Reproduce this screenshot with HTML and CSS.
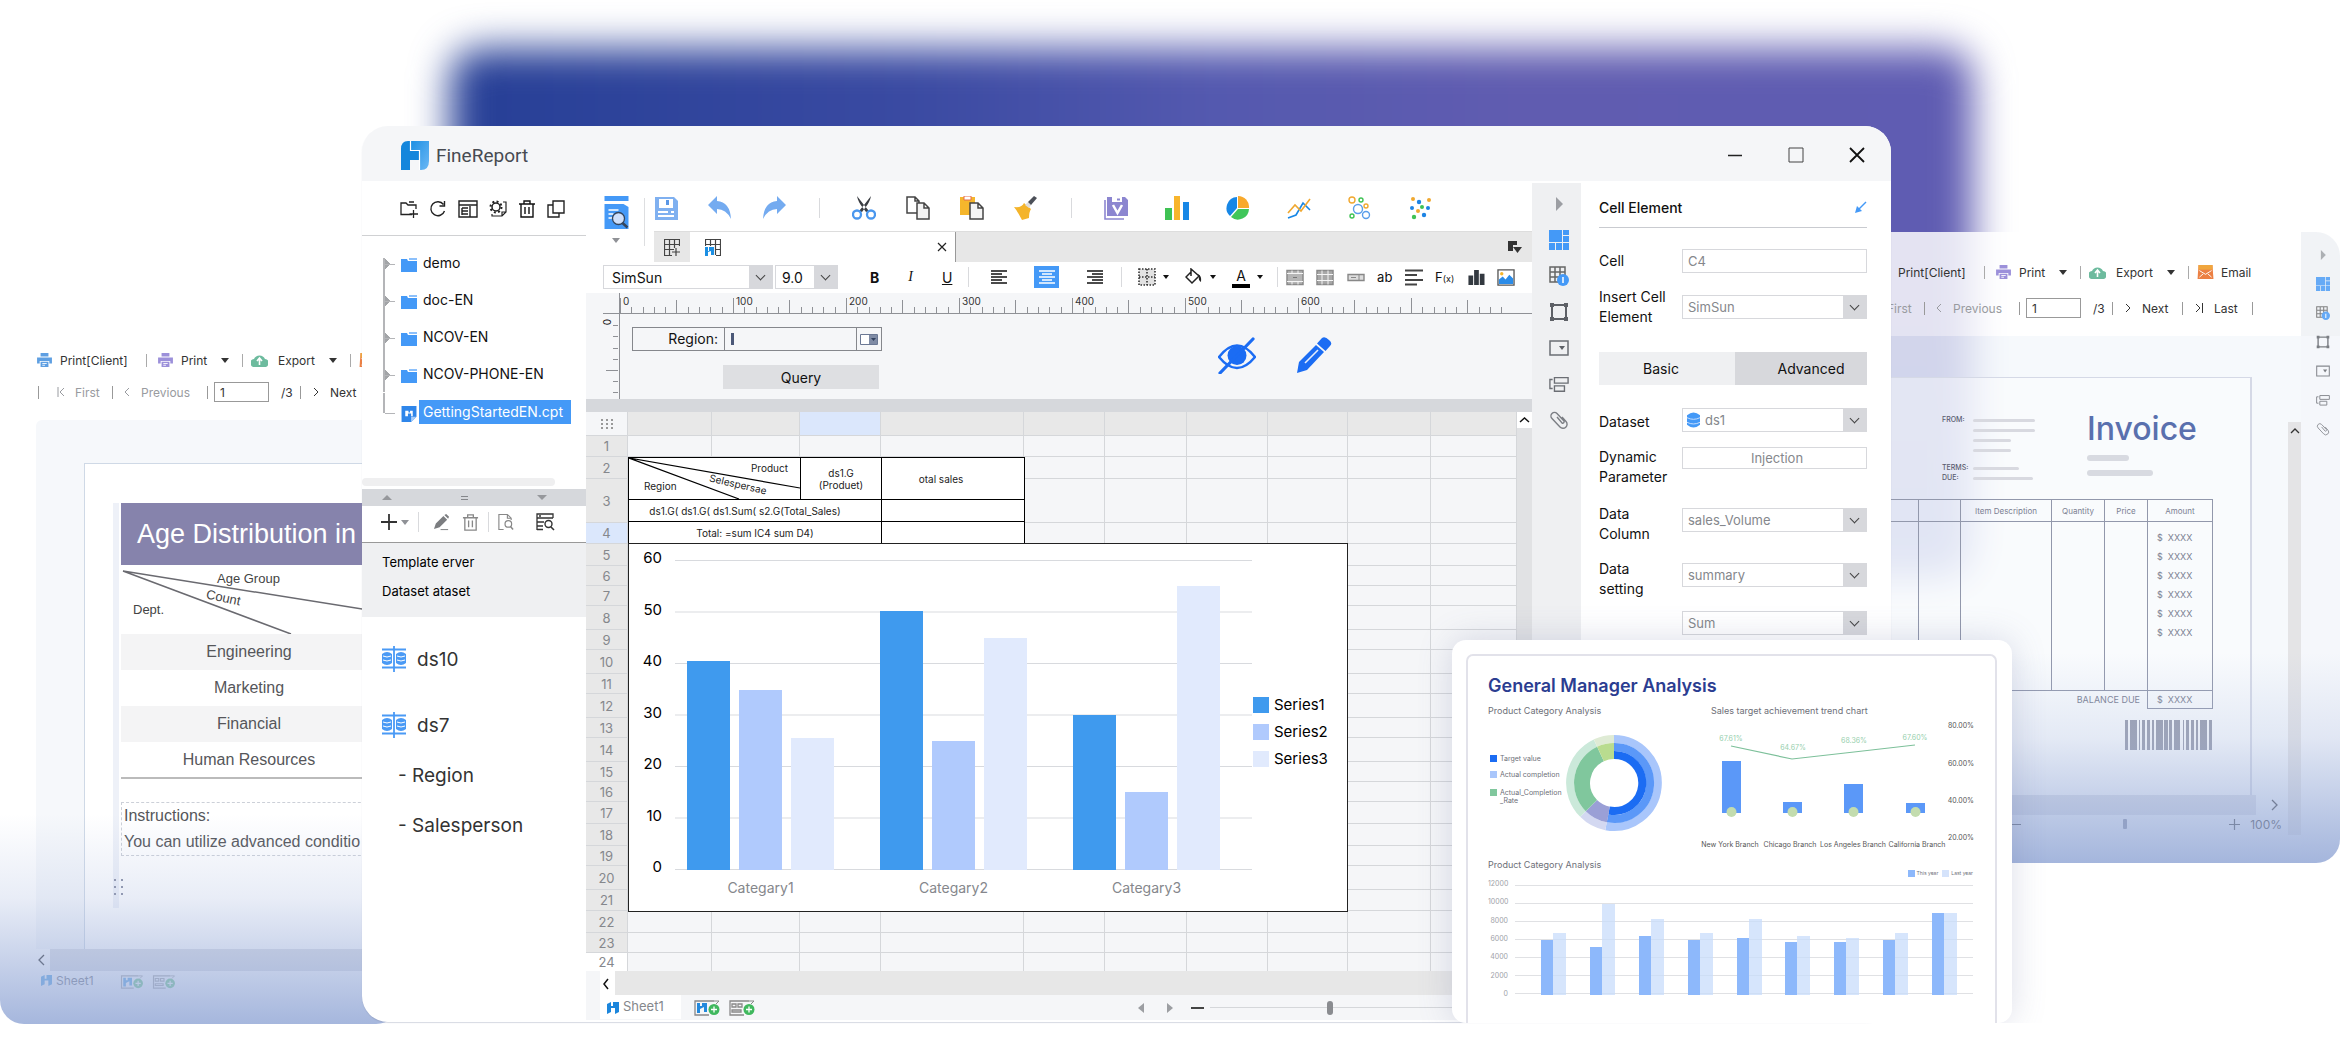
FILE: index.html
```html
<!DOCTYPE html>
<html lang="en">
<head>
<meta charset="utf-8">
<title>FineReport</title>
<link rel="stylesheet" href="styles.css">
</head>
<body>
<svg class="defs" aria-hidden="true">
  <defs>
    <linearGradient id="lg" x1="0" y1="0" x2="1" y2="1"><stop offset="0" stop-color="#1c8fe3"/><stop offset="1" stop-color="#6cb8f5"/></linearGradient>
    <pattern id="ruler" width="113" height="20" patternUnits="userSpaceOnUse">
      <path d="M.5 5V20M56.5 7V20M11.5 14V20M23.500 14V20M34.500 14V20M45.500 14V20M68.500 14V20M79.500 14V20M90.500 14V20M102.500 14V20" stroke="#8f9196" fill="none"/>
    </pattern>
  </defs>
  <symbol id="logo" viewBox="0 0 28 29"><path d="M7 0H9V10H18V19H9V29H0V8Q0 0 7 0Z" fill="#1486dc"/><path d="M10 0H28V20Q28 29 20 29H19V10H10Z" fill="url(#lg)"/><path d="M9.500 0V9.500H18.500V29" stroke="#fff" stroke-width="1.200" fill="none"/></symbol>
  <symbol id="folder" viewBox="0 0 16 14"><path d="M0 1H6L7 3H16V14H0Z" fill="#4499f7"/><path d="M8 0H16V2H8Z" fill="#8cc0fb"/></symbol>
  <symbol id="cpt" viewBox="0 0 14 15"><path d="M0 0H14V10L9 15H0Z" fill="#2f86ea"/><path d="M14 10H9V15Z" fill="#a8cdfa"/><path d="M3.500 4.500H6.500V6H8V4.500H10.500V9.500H9V7H6V9.500H3.500Z" fill="#fff"/></symbol>
  <symbol id="newfolder" viewBox="0 0 18 18"><path d="M12 14.500H1V3H6L8 5H16V9M9 2H14M13.500 10V18M9.500 14H18" stroke="#222" stroke-width="1.300" fill="none"/></symbol>
  <symbol id="refresh" viewBox="0 0 18 18"><path d="M14.500 4.500A7 7 0 1 0 15.500 11M15.500 1V6H10.500" stroke="#222" stroke-width="1.400" fill="none"/></symbol>
  <symbol id="win" viewBox="0 0 20 18"><path d="M1 1H19V17H1ZM1 5H19M4 8V15M4 8H10M4 11H10M4 14H10M12 6V17" stroke="#222" stroke-width="1.400" fill="none"/></symbol>
  <symbol id="gear" viewBox="0 0 18 18"><circle cx="7" cy="7" r="4" stroke="#222" stroke-width="1.500" fill="none"/><circle cx="7" cy="7" r="5.500" stroke="#222" stroke-width="2" stroke-dasharray="2 2.300" fill="none"/><path d="M14 2H17V12L13 16H3V14M17 12H13V16" stroke="#222" stroke-width="1.200" fill="none"/></symbol>
  <symbol id="trash" viewBox="0 0 18 18"><path d="M1 4H17M6 4V1H12V4M3 4V17H15V4M7 7V14M11 7V14" stroke="currentColor" stroke-width="1.400" fill="none"/></symbol>
  <symbol id="copy2" viewBox="0 0 18 18"><path d="M6 1H17V13H6ZM6 5H1V17H12V13" stroke="#222" stroke-width="1.400" fill="none"/></symbol>
  <symbol id="plus" viewBox="0 0 16 16"><path d="M8 0V16M0 8H16" stroke="#333" stroke-width="1.800"/></symbol>
  <symbol id="edit" viewBox="0 0 18 18"><path d="M1 16L3 10L11 2L15 6L7 14ZM12 1L14 0L17 3L16 5Z" fill="#7b7d80"/><path d="M8 16.500H16" stroke="#7b7d80"/></symbol>
  <symbol id="docfind" viewBox="0 0 18 18"><path d="M7 17H2V1H11L15 5V7M11 1V5H15" stroke="#888" stroke-width="1.200" fill="none"/><circle cx="12" cy="11" r="3.500" stroke="#888" stroke-width="1.300" fill="none"/><path d="M14.500 14L17 17" stroke="#888" stroke-width="1.500"/></symbol>
  <symbol id="tabfind" viewBox="0 0 19 18"><path d="M1 17V1H17V5M1 5H17M1 9H8M1 13H7M1 16.500H7M3 3H5" stroke="#333" stroke-width="1.300" fill="none"/><circle cx="12.500" cy="11" r="3.500" stroke="#333" stroke-width="1.400" fill="none"/><path d="M15 14L18 17" stroke="#333" stroke-width="1.600"/></symbol>
  <symbol id="dbs" viewBox="0 0 24 26"><path d="M0 3.500H24M0 21.500H24M12 0V26" stroke="#4a9af5" stroke-width="1.800"/><path d="M0 8Q5 4 10 8V17Q5 21 0 17ZM14 8Q19 4 24 8V17Q19 21 14 17Z" fill="#4a9af5"/><path d="M1 10Q5 12 9 10M1 14Q5 16 9 14M15 10Q19 12 23 10M15 14Q19 16 23 14" stroke="#fff" fill="none"/></symbol>
  <symbol id="preview" viewBox="0 0 24 33"><path d="M0 0H24V5H0ZM0 8H19L24 11V33H0Z" fill="#4499f7"/><path d="M4 14H14M4 18H9M4 22H8" stroke="#fff" stroke-width="1.500"/><circle cx="14" cy="22.500" r="6" fill="#cfe0fb" stroke="#35455c" stroke-width="1.300"/><path d="M18 27L23 31.500" stroke="#35455c" stroke-width="2.500"/></symbol>
  <symbol id="save" viewBox="0 0 24 24"><path d="M1 1H20L24 5V24H1Z" fill="#7fb0f0"/><path d="M5 3H19V12H5Z" fill="#fff"/><path d="M12 4H15V9H12Z" fill="#5a97e6"/><path d="M4 16H14M17 16H20M4 20H20" stroke="#fff" stroke-width="1.800"/></symbol>
  <symbol id="undo" viewBox="0 0 24 24"><path d="M0 9L9 0V5Q22 6 23 23Q18 13 9 13V18Z" fill="#74abf0"/></symbol>
  <symbol id="redo" viewBox="0 0 24 24"><path d="M24 9L15 0V5Q2 6 1 23Q6 13 15 13V18Z" fill="#74abf0"/></symbol>
  <symbol id="cut" viewBox="0 0 24 24"><path d="M5 0Q6 6 11 12L14 16L17 15L12 9ZM19 0Q18 6 13 12L10 16L7 15L12 9Z" fill="#3a3d42"/><circle cx="5" cy="18.500" r="4" fill="none" stroke="#4a97ee" stroke-width="2.300"/><circle cx="19" cy="18.500" r="4" fill="none" stroke="#4a97ee" stroke-width="2.300"/></symbol>
  <symbol id="copy" viewBox="0 0 24 24"><path d="M1 1H9L13 5V17H1ZM9 1V5H13" fill="#fff" stroke="#444" stroke-width="1.500"/><path d="M11 7H18L23 12V23H11ZM18 7V12H23" fill="#f3f3f3" stroke="#444" stroke-width="1.500"/></symbol>
  <symbol id="paste" viewBox="0 0 24 24"><path d="M0 1H15V19H0Z" fill="#f5b62c"/><path d="M4 0H11V4H4Z" fill="#fff" stroke="#e56c4c"/><path d="M10 7H18L23 12V23H10ZM18 7V12H23" fill="#f5f5f5" stroke="#444" stroke-width="1.500"/></symbol>
  <symbol id="brush" viewBox="0 0 24 24"><path d="M0 11Q8 12 10 7L17 13Q15 16 15 22L8 24Q4 16 0 11Z" fill="#f4b42a"/><path d="M11 9L14 6L17 9L15 12Z" fill="#ddd"/><path d="M14 6L20 0L23 2L17 9Z" fill="#4c5058"/></symbol>
  <symbol id="vsave" viewBox="0 0 24 24"><path d="M3 1H21L24 4V20H3Z" fill="#8c86d0"/><path d="M1 4V23H20" stroke="#8c86d0" stroke-width="1.600" fill="none"/><path d="M8 1H18V6H8Z" fill="#fff"/><path d="M13 3.500H16" stroke="#8c86d0" stroke-width="2"/><path d="M9 9L13.500 17L18 9" stroke="#fff" stroke-width="2.500" fill="none"/></symbol>
  <symbol id="bars" viewBox="0 0 24 24"><path d="M0 12H7V24H0Z" fill="#3fc254"/><path d="M9 0H15V24H9Z" fill="#f8b52c"/><path d="M18 6H24V24H18Z" fill="#1787e6"/></symbol>
  <symbol id="pie" viewBox="0 0 24 24"><path d="M11 1A11 11 0 0 0 4 20L11 12Z" fill="#1787e6"/><path d="M12 0A11 11 0 0 1 23 12H12Z" fill="#f8a92c"/><path d="M12 13H23A11 11 0 0 1 5 21Z" fill="#40c65a"/></symbol>
  <symbol id="lines" viewBox="0 0 24 24"><path d="M1 22L9 19L16 7L23 14" stroke="#1787e6" stroke-width="1.600" fill="none"/><path d="M1 17L8 9L14 15L23 3" stroke="#f0a830" stroke-width="1.600" fill="none"/></symbol>
  <symbol id="bubbles" viewBox="0 0 24 24" ><g fill="none" stroke-width="1.400"><circle cx="4" cy="4" r="3" stroke="#f0a830"/><circle cx="13" cy="4" r="2" stroke="#3fc254"/><circle cx="18" cy="10" r="2" stroke="#f0a830"/><circle cx="10" cy="13" r="4.500" stroke="#5a9eea"/><circle cx="4" cy="20" r="2" stroke="#3fc254"/><circle cx="18" cy="19" r="3.500" stroke="#5a9eea"/></g></symbol>
  <symbol id="dots" viewBox="0 0 24 24"><g fill="#f0a830"><circle cx="4" cy="3" r="2"/><circle cx="20" cy="4" r="2"/><circle cx="9" cy="15" r="2"/></g><g fill="#1d84e4"><circle cx="10" cy="6" r="2.200"/><circle cx="3" cy="12" r="2"/><circle cx="19" cy="12" r="2"/><circle cx="15" cy="19" r="2.200"/></g><g fill="#3fc254"><circle cx="13" cy="11" r="2"/><circle cx="5" cy="21" r="2.200"/></g></symbol>
  <symbol id="gridplus" viewBox="0 0 16 17"><path d="M15.500 7V.5H.5V16.500H8M.5 5.500H15.500M.5 10.500H10M5.500 .5V16M10.500 .5V9M12 9V17M8 13H16" stroke="#444" stroke-width="1.200" fill="none"/></symbol>
  <symbol id="gridlogo" viewBox="0 0 16 17"><path d="M.5 7V.5H15.500V16.500H11M.5 5.500H15.500M5.500 .5V7M10.500 .5V16M10 10.500H15.500" stroke="#444" stroke-width="1.200" fill="none"/><path d="M0 8H3V12H4V8H9V16H6V12L3 13V17H0Z" fill="#1c8fe3"/></symbol>
  <symbol id="windrop" viewBox="0 0 14 13"><path d="M0 0H9V4H5V10H0Z" fill="#333"/><path d="M5 6H14L9.500 12Z" fill="#333"/></symbol>
  <symbol id="al" viewBox="0 0 16 14"><path d="M0 1H16M0 4H11M0 7H16M0 10H11M0 13H16" stroke="currentColor" stroke-width="1.400"/></symbol>
  <symbol id="ac" viewBox="0 0 16 14"><path d="M0 1H16M3 4H13M0 7H16M3 10H13M0 13H16" stroke="currentColor" stroke-width="1.400"/></symbol>
  <symbol id="ar" viewBox="0 0 16 14"><path d="M0 1H16M5 4H16M0 7H16M5 10H16M0 13H16" stroke="currentColor" stroke-width="1.400"/></symbol>
  <symbol id="para" viewBox="0 0 18 16"><path d="M0 1H18M0 5.500H12M0 10.500H18M0 15H12" stroke="#444" stroke-width="1.800"/></symbol>
  <symbol id="border" viewBox="0 0 18 18"><path d="M1 1H17V17H1ZM9 1V17M1 9H17" stroke="#333" stroke-width="1.600" stroke-dasharray="1.500 1.500" fill="#e2e2e2"/></symbol>
  <symbol id="bucket" viewBox="0 0 18 18"><path d="M6 4L1 9L7 15L14 8L6 1V8" fill="none" stroke="#222" stroke-width="1.500"/><path d="M13 6Q17 8 16 14Q13 12 14 9Z" fill="#222"/></symbol>
  <symbol id="merge" viewBox="0 0 18 16"><path d="M1 1H17V15H1Z" fill="#b5b5b5" stroke="#8a8a8a" stroke-width="1.500"/><path d="M1 4H17M1 12H17M6 1V4M12 1V4M6 12V15M12 12V15" stroke="#f5f5f5"/><path d="M7 8H11" stroke="#777"/></symbol>
  <symbol id="unmerge" viewBox="0 0 18 16"><path d="M1 1H17V15H1Z" fill="#a8a8a8" stroke="#8a8a8a" stroke-width="1.500"/><path d="M1 5H17M1 11H17M6 1V15M12 1V15" stroke="#f5f5f5"/></symbol>
  <symbol id="widget" viewBox="0 0 18 16"><path d="M1 5H17V11H1Z" fill="#ddd" stroke="#888" stroke-width="1.400"/><path d="M4 8H9M12 5V11" stroke="#888"/></symbol>
  <symbol id="chart" viewBox="0 0 18 18"><path d="M1 7H6V17H1ZM7 1H12V17H7ZM13 5H18V17H13Z" fill="#333940"/></symbol>
  <symbol id="image" viewBox="0 0 19 18"><path d="M1 1H18V17H1Z" fill="#fff" stroke="#555" stroke-width="1.400"/><path d="M2 11L6 8L9 11L13 6L17 10V16H2Z" fill="#2b8ce8"/><circle cx="5" cy="5" r="1.800" fill="#f5b62c"/></symbol>
  <symbol id="eye" viewBox="0 0 38 37"><path d="M1 20Q19 -3 37 20Q19 42 1 20Z" fill="none" stroke="#1b6cf3" stroke-width="2.500"/><circle cx="19" cy="18.500" r="9.500" fill="#1b6cf3"/><path d="M2 36L35 2" stroke="#1b6cf3" stroke-width="3.200" stroke-linecap="round"/></symbol>
  <symbol id="pencil" viewBox="0 0 36 36"><path d="M1 36L3 25L20 8L28 15L11 33Z" fill="#1b6cf3"/><path d="M21 6.500L26 1Q29 -1 33 3Q37 6 34 9L29.500 14Z" fill="#1b6cf3"/><path d="M9 26L22 13" stroke="#e6eefc" stroke-width="1.600"/></symbol>
  <symbol id="layout" viewBox="0 0 20 20"><path d="M0 0H13V12H0ZM14 0H20V5H14ZM14 6H20V12H14ZM0 13H6V20H0ZM7 13H13V20H7ZM14 13H20V20H14Z" fill="#4499f7"/></symbol>
  <symbol id="ginfo" viewBox="0 0 20 20"><path d="M1 1H16V16H1ZM1 6H16M1 11H16M6 1V16M11 1V16" stroke="#666" stroke-width="1.500" fill="none"/><circle cx="14" cy="14" r="6" fill="#4499f7"/><path d="M14 11V17" stroke="#fff" stroke-width="1.500"/></symbol>
  <symbol id="frame" viewBox="0 0 20 20"><path d="M3 3H17V17H3Z" stroke="#5d6066" stroke-width="2" fill="none"/><path d="M1 1H5V5H1ZM15 1H19V5H15ZM1 15H5V19H1ZM15 15H19V19H15Z" fill="#5d6066"/></symbol>
  <symbol id="drop" viewBox="0 0 20 20"><path d="M1 3H19V17H1Z" stroke="#6b6e74" stroke-width="1.500" fill="none"/><path d="M10 8H16L13 12Z" fill="#5d6066"/></symbol>
  <symbol id="tree" viewBox="0 0 22 20"><path d="M6 3H21V9H6ZM6 12H17V18H6ZM4 5H1V15H4" stroke="#6b6e74" stroke-width="1.500" fill="none"/></symbol>
  <symbol id="clip" viewBox="0 0 20 20"><path d="M8 7L13 13A1.500 1.500 0 0 0 15 11L8 3.500A3.500 3.500 0 0 0 3 8.500L11 17A4 4 0 0 0 17 11.500L13 7" stroke="#7b7e84" stroke-width="1.400" fill="none"/></symbol>
  <symbol id="play" viewBox="0 0 20 20"><path d="M7 3L14 10L7 17Z" fill="#9c9ea3"/></symbol>
  <symbol id="db" viewBox="0 0 14 16"><path d="M0 3Q7 -3 14 3V13Q7 19 0 13Z" fill="#4499f7"/><path d="M0 5.500Q7 9 14 5.500M0 10.500Q7 14 14 10.500" stroke="#cfe2fc" fill="none"/></symbol>
  <symbol id="printer" viewBox="0 0 17 16"><path d="M4 0H13V4H4ZM0 5H17V12H14V9H3V12H0ZM4 10H13V16H4Z" fill="currentColor"/><path d="M6 12H11M6 14H9" stroke="#fff"/></symbol>
  <symbol id="cloud" viewBox="0 0 17 14"><path d="M4 14A4 4 0 0 1 3 6A6 6 0 0 1 14 6A4 4 0 0 1 13 14Z" fill="#6dbb9e"/><path d="M8.500 12V6M6 8L8.500 5L11 8" stroke="#fff" stroke-width="1.600" fill="none"/></symbol>
  <symbol id="mail" viewBox="0 0 17 15"><path d="M1 0H16L17 15H0Z" fill="#ec8044"/><path d="M1 0H16V5H1Z" fill="#f0a63e"/><path d="M2 6L8.500 10L15 6M2 13L6 9.500M15 13L11 9.500" stroke="#fff" fill="none"/></symbol>
  <symbol id="addlogo" viewBox="0 0 26 16"><path d="M20 1H1V15H15" stroke="#888" stroke-width="1.300" fill="none"/><path d="M3 3H6V6H8V3H13V12H10V7L6 9V13H3Z" fill="#2389dd"/><circle cx="20" cy="9.500" r="5.500" fill="#40b85e"/><path d="M20 6.500V12.500M17 9.500H23" stroke="#fff" stroke-width="1.300"/><path d="M20 1H25L22 4" stroke="#888" fill="none"/></symbol>
  <symbol id="addform" viewBox="0 0 26 16"><path d="M20 1H1V15H15M3 4H7V7H3ZM9 4H13V7H9ZM3 10H12V12H3Z" stroke="#888" stroke-width="1.300" fill="none"/><circle cx="20" cy="9.500" r="5.500" fill="#40b85e"/><path d="M20 6.500V12.500M17 9.500H23" stroke="#fff" stroke-width="1.300"/><path d="M20 1H25L22 4" stroke="#888" fill="none"/></symbol>
  <symbol id="shlogo" viewBox="0 0 12 12"><path d="M0 2L4 0V4H6V0H12V10L8 12V6H4V10L0 12Z" fill="#1c86dc"/></symbol>
</svg>

<main class="scene">
  <div class="glow"></div>

  <section class="win viewer viewer-left">
    <div class="viewer-tools">
      <div class="bar1">
        <button><svg class="i-blue" width="17" height="14"><use href="#printer"/></svg>Print[Client]</button>
        <button><svg class="i-violet" width="17" height="14"><use href="#printer"/></svg>Print<i class="car"></i></button>
        <button><svg width="17" height="14"><use href="#cloud"/></svg><span class="wide">Export</span><i class="car"></i></button>
        <button aria-label="Email"><svg width="17" height="14"><use href="#mail"/></svg></button>
      </div>
      <div class="bar2">
        <button class="off"><svg width="7" height="10"><path d="M1 0V10M7 1L3 5L7 9" stroke="currentColor" fill="none"/></svg>First</button>
        <button class="off prev"><svg width="6" height="10"><path d="M5 1L1 5L5 9" stroke="currentColor" fill="none"/></svg>Previous</button>
        <label class="pager"><input value="1" aria-label="Page">/3</label>
        <button><svg width="6" height="10"><path d="M1 1L5 5L1 9" stroke="currentColor" fill="none"/></svg>Next</button>
      </div>
    </div>
    <div class="age-canvas">
      <div class="age-paper">
        <div class="age-edge"></div>
        <div class="age-report">
          <h2>Age Distribution in</h2>
          <div class="age-diag">
            <svg width="260" height="69"><path d="M2 6L260 47M2 6L170 69" stroke="#6a6a70" stroke-width="1.500" fill="none"/></svg>
            <span class="ag">Age Group</span><span class="ct">Count</span><span class="dp">Dept.</span>
          </div>
          <table class="age-table">
            <tr><td>Engineering</td></tr><tr><td>Marketing</td></tr><tr><td>Financial</td></tr><tr><td>Human Resources</td></tr>
          </table>
          <p class="age-note">Instructions:<br>You can utilize advanced conditio</p>
          <svg class="grip" width="10" height="16"><path d="M1 1H3M8 1H10M1 8H3M8 8H10M1 15H3M8 15H10" stroke="#8b90a5" stroke-width="2"/></svg>
        </div>
      </div>
    </div>
    <div class="age-scroll"><svg width="14" height="12"><path d="M8 1L3 6L8 11" stroke="#333" stroke-width="1.300" fill="none"/></svg><div></div></div>
    <div class="age-sheets"><span class="tab"><svg width="11" height="11"><use href="#shlogo"/></svg>Sheet1</span><svg width="24" height="14"><use href="#addlogo"/></svg><svg width="24" height="14"><use href="#addform"/></svg></div>
  </section>

  <section class="win viewer viewer-right">
    <div class="inv-main">
      <div class="viewer-tools">
        <div class="bar1">
          <button><svg class="i-blue" width="17" height="14"><use href="#printer"/></svg>Print[Client]</button>
          <button><svg class="i-violet" width="17" height="14"><use href="#printer"/></svg>Print<i class="car"></i></button>
          <button><svg width="17" height="14"><use href="#cloud"/></svg><span class="wide">Export</span><i class="car"></i></button>
          <button><svg width="17" height="14"><use href="#mail"/></svg>Email</button>
        </div>
        <div class="bar2">
          <button class="off"><svg width="7" height="10"><path d="M1 0V10M7 1L3 5L7 9" stroke="currentColor" fill="none"/></svg>First</button>
          <button class="off prev"><svg width="6" height="10"><path d="M5 1L1 5L5 9" stroke="currentColor" fill="none"/></svg>Previous</button>
          <label class="pager"><input value="1" aria-label="Page">/3</label>
          <button><svg width="6" height="10"><path d="M1 1L5 5L1 9" stroke="currentColor" fill="none"/></svg>Next</button>
          <button><svg width="8" height="10"><path d="M1 1L5 5L1 9M7.500 0V10" stroke="currentColor" fill="none"/></svg>Last</button>
          <i class="end"></i>
        </div>
      </div>
      <div class="inv-body">
        <div class="inv-col">
          <div class="inv-paper">
            <div class="inv-head">
              <div class="inv-from">
                <b>FROM:</b><p><i class="l62"></i><i class="l62"></i><i class="l38"></i><i class="l38"></i></p>
                <b>TERMS:</b><p><i class="l46"></i></p>
                <b>DUE:</b><p><i class="l60"></i></p>
              </div>
              <div class="inv-title"><h2>Invoice</h2><i class="t1"></i><i class="t2"></i></div>
            </div>
            <table class="inv-table">
              <colgroup><col class="c80"><col class="c42"><col class="c91"><col class="c53"><col class="c43"><col class="c65"></colgroup>
              <thead><tr><th></th><th></th><th>Item Description</th><th>Quantity</th><th>Price</th><th>Amount</th></tr></thead>
              <tbody><tr><td></td><td></td><td></td><td></td><td></td><td class="amt">$ &nbsp;XXXX<br>$ &nbsp;XXXX<br>$ &nbsp;XXXX<br>$ &nbsp;XXXX<br>$ &nbsp;XXXX<br>$ &nbsp;XXXX</td></tr></tbody>
              <tfoot><tr><td colspan="5">BALANCE DUE</td><td>$ &nbsp;XXXX</td></tr></tfoot>
            </table>
            <svg class="barcode" width="87" height="30"><path d="M0 0H3V30H0ZM5 0H12V30H5ZM14 0H15V30H14ZM17 0H20V30H17ZM22 0H25V30H22ZM27 0H29V30H27ZM31 0H38V30H31ZM39 0H43V30H39ZM44 0H47V30H44ZM49 0H55V30H49ZM58 0H59V30H58ZM61 0H64V30H61ZM66 0H69V30H66ZM71 0H73V30H71ZM75 0H82V30H75ZM84 0H87V30H84Z" fill="#9a9eae"/></svg>
          </div>
          <div class="inv-scroll"><div></div><svg width="32" height="12"><path d="M16 1L21 6L16 11" stroke="#444" stroke-width="1.300" fill="none"/></svg></div>
          <div class="inv-zoom"><span class="mn"></span><span class="trk"><i></i></span><svg width="11" height="11"><path d="M5.500 0V11M0 5.500H11" stroke="#444" stroke-width="1.200"/></svg>100%</div>
        </div>
        <div class="inv-vs"><svg width="13" height="16"><path d="M3 11L7 7L11 11" stroke="#333" stroke-width="1.300" fill="none"/></svg></div>
      </div>
    </div>
    <nav class="strip small">
      <svg><use href="#play"/></svg><svg><use href="#layout"/></svg><svg><use href="#ginfo"/></svg><svg><use href="#frame"/></svg><svg><use href="#drop"/></svg><svg><use href="#tree"/></svg><svg><use href="#clip"/></svg>
    </nav>
  </section>

  <section class="win designer">
    <header class="title">
      <svg width="28" height="29"><use href="#logo"/></svg><span>FineReport</span>
      <div class="ctl">
        <button aria-label="Minimize"><svg width="16" height="16"><path d="M1 8.500H15" stroke="#222" stroke-width="1.600"/></svg></button>
        <button aria-label="Maximize"><svg width="16" height="16"><path d="M1 1H15V15H1Z" stroke="#444" fill="none"/></svg></button>
        <button aria-label="Close"><svg width="16" height="16"><path d="M1 1L15 15M15 1L1 15" stroke="#111" stroke-width="1.800"/></svg></button>
      </div>
    </header>
    <div class="body">
      <aside class="side">
        <div class="side-tools">
          <svg width="18" height="18"><use href="#newfolder"/></svg><svg width="18" height="18"><use href="#refresh"/></svg><svg width="20" height="18"><use href="#win"/></svg><svg width="18" height="18"><use href="#gear"/></svg><svg width="18" height="18"><use href="#trash"/></svg><svg width="18" height="18"><use href="#copy2"/></svg>
        </div>
        <ul class="files">
          <li><svg width="16" height="14"><use href="#folder"/></svg><a href="#">demo</a></li>
          <li><svg width="16" height="14"><use href="#folder"/></svg><a href="#">doc-EN</a></li>
          <li><svg width="16" height="14"><use href="#folder"/></svg><a href="#">NCOV-EN</a></li>
          <li><svg width="16" height="14"><use href="#folder"/></svg><a href="#">NCOV-PHONE-EN</a></li>
          <li class="on"><svg width="16" height="16"><use href="#cpt"/></svg><a href="#">GettingStartedEN.cpt</a></li>
        </ul>
        <div class="hbar"></div>
        <div class="split"><i class="up"></i><b></b><i class="dn"></i></div>
        <div class="ds-tools">
          <svg width="16" height="16"><use href="#plus"/></svg><i class="car g"></i><i class="sep"></i><svg width="17" height="17"><use href="#edit"/></svg><svg class="tr" width="17" height="17"><use href="#trash"/></svg><i class="sep"></i><svg width="17" height="18"><use href="#docfind"/></svg><svg class="tf" width="19" height="18"><use href="#tabfind"/></svg>
        </div>
        <div class="ds-tabs"><span>Template erver</span><span>Dataset ataset</span></div>
        <ul class="ds">
          <li><svg width="24" height="26"><use href="#dbs"/></svg>ds10</li>
          <li><svg width="24" height="26"><use href="#dbs"/></svg>ds7</li>
          <li class="sub">- Region</li>
          <li class="sub">- Salesperson</li>
        </ul>
      </aside>

      <div class="center">
        <div class="top">
          <div class="pv"><svg width="25" height="33"><use href="#preview"/></svg><i class="car g"></i></div>
          <div class="toolbar">
            <svg><use href="#save"/></svg><svg><use href="#undo"/></svg><svg><use href="#redo"/></svg><i class="sep"></i>
            <svg><use href="#cut"/></svg><svg><use href="#copy"/></svg><svg><use href="#paste"/></svg><svg><use href="#brush"/></svg><i class="sep"></i>
            <div class="charts"><svg><use href="#vsave"/></svg><svg><use href="#bars"/></svg><svg><use href="#pie"/></svg><svg><use href="#lines"/></svg><svg><use href="#bubbles"/></svg><svg><use href="#dots"/></svg></div>
          </div>
          <div class="tabs">
            <button class="add" aria-label="New"><svg width="16" height="17"><use href="#gridplus"/></svg></button>
            <div class="cur"><svg width="16" height="17"><use href="#gridlogo"/></svg><button aria-label="Close tab"><svg width="10" height="10"><path d="M1 1L9 9M9 1L1 9" stroke="#222" stroke-width="1.200"/></svg></button></div>
            <svg class="wd" width="14" height="13"><use href="#windrop"/></svg>
          </div>
        </div>
        <div class="format">
          <div class="sel f1"><select aria-label="Font"><option>SimSun</option></select><i></i></div>
          <div class="sel f2"><select aria-label="Size"><option>9.0</option></select><i></i></div>
          <div class="biu"><b>B</b><em>I</em><u>U</u></div><i class="sep"></i>
          <div class="aligns"><span><svg width="16" height="14"><use href="#al"/></svg></span><span class="on"><svg width="16" height="14"><use href="#ac"/></svg></span><span><svg width="16" height="14"><use href="#ar"/></svg></span></div><i class="sep"></i>
          <div class="fills"><svg width="18" height="18"><use href="#border"/></svg><i class="car k"></i><svg width="18" height="18"><use href="#bucket"/></svg><i class="car k"></i><span class="fc">A</span><i class="car k"></i></div><i class="sep"></i>
          <div class="cells"><svg><use href="#merge"/></svg><svg><use href="#unmerge"/></svg><svg><use href="#widget"/></svg><span>ab</span><svg><use href="#para"/></svg><span>F<small>(x)</small></span><svg><use href="#chart"/></svg><svg><use href="#image"/></svg></div>
        </div>
        <div class="params">
          <div class="corner"></div>
          <div class="hruler"><svg width="890" height="20"><rect width="890" height="20" fill="url(#ruler)"/></svg><div class="nums"><span>0</span><span>100</span><span>200</span><span>300</span><span>400</span><span>500</span><span>600</span></div></div>
          <div class="vruler"><svg width="16" height="85"><path d="M10 11.500H15M10 22.500H15M10 34.500H15M10 45.500H15M3 56.500H15M10 67.500H15M10 78.500H15" stroke="#8f9196"/></svg><span>0</span></div>
          <div class="pform">
            <div class="pl">
              <div class="region"><label for="rg">Region:</label><input id="rg"><span><svg width="18" height="11"><path d="M.5 .5H17.500V10.500H.5Z" fill="#fff" stroke="#6b7894"/><path d="M9 1H17V10H9Z" fill="#7f8ba5"/><path d="M11 4H16L13.500 7Z" fill="#30405f"/></svg></span></div>
              <button class="query">Query</button>
            </div>
            <div class="pe"><svg width="38" height="37"><use href="#eye"/></svg><svg width="36" height="36"><use href="#pencil"/></svg></div>
          </div>
        </div>
        <div class="divide"></div>
        <div class="grid-wrap">
          <div class="sheet-box">
            <table class="sheet">
              <colgroup><col class="w42"><col class="w84"><col class="w88"><col class="w81"><col class="w143"><col class="w81"><col class="w82"><col class="w81"><col class="w80"><col class="w83"><col></colgroup>
              <thead><tr><th><svg width="14" height="10"><path d="M1 1H3M6 1H8M11 1H13M1 5H3M6 5H8M11 5H13M1 9H3M6 9H8M11 9H13" stroke="#999" stroke-width="2"/></svg><th><th><th class="hl"><th><th><th><th><th><th><th></thead>
              <tbody>
              <tr class="h21"><th>1<td><td><td><td><td><td><td><td><td><td>
              <tr class="h22"><th>2<td><td><td><td><td><td><td><td><td><td>
              <tr class="h44"><th>3<td><td><td><td><td><td><td><td><td><td>
              <tr class="h21"><th class="hl">4<td><td><td><td><td><td><td><td><td><td>
              <tr class="h22"><th>5<td><td><td><td><td><td><td><td><td><td>
              <tr><th>6<td><td><td><td><td><td><td><td><td><td>
              <tr><th>7<td><td><td><td><td><td><td><td><td><td>
              <tr class="h24"><th>8<td><td><td><td><td><td><td><td><td><td>
              <tr><th>9<td><td><td><td><td><td><td><td><td><td>
              <tr class="h24"><th>10<td><td><td><td><td><td><td><td><td><td>
              <tr><th>11<td><td><td><td><td><td><td><td><td><td>
              <tr class="h24"><th>12<td><td><td><td><td><td><td><td><td><td>
              <tr><th>13<td><td><td><td><td><td><td><td><td><td>
              <tr class="h24"><th>14<td><td><td><td><td><td><td><td><td><td>
              <tr><th>15<td><td><td><td><td><td><td><td><td><td>
              <tr><th>16<td><td><td><td><td><td><td><td><td><td>
              <tr class="h22"><th>17<td><td><td><td><td><td><td><td><td><td>
              <tr class="h22"><th>18<td><td><td><td><td><td><td><td><td><td>
              <tr><th>19<td><td><td><td><td><td><td><td><td><td>
              <tr class="h24"><th>20<td><td><td><td><td><td><td><td><td><td>
              <tr class="h21"><th>21<td><td><td><td><td><td><td><td><td><td>
              <tr class="h22"><th>22<td><td><td><td><td><td><td><td><td><td>
              <tr><th>23<td><td><td><td><td><td><td><td><td><td>
              <tr class="h18 last"><th>24<td><td><td><td><td><td><td><td><td><td>
              </tbody>
            </table>
            <table class="report">
              <colgroup><col class="w172"><col class="w81"><col class="w143"></colgroup>
              <tr class="ra"><td class="diag"><svg width="171" height="41"><path d="M0 0L171 30M0 0L110 41" stroke="#000" stroke-width="1.200" fill="none"/></svg><span class="p">Product</span><span class="s">Selespersae</span><span class="r">Region</span></td><td>ds1.G<br>(Produet)</td><td class="ots">otal sales</td></tr>
              <tr class="rb"><td colspan="2" class="sum">ds1.G( ds1.G( ds1.Sum( s2.G(Total_Sales)</td><td></td></tr>
              <tr class="rb"><td colspan="2">Total: =sum IC4 sum D4)</td><td></td></tr>
            </table>
            <div class="chart">
              <div class="ylab"><span>60</span><span>50</span><span>40</span><span>30</span><span>20</span><span>10</span><span>0</span></div>
              <div class="plotcol">
                <div class="plot">
                  <div class="grp"><i class="s1" style="height:67.500%"></i><i class="s2" style="height:58%"></i><i class="s3" style="height:42.500%"></i></div>
                  <div class="grp"><i class="s1" style="height:83.500%"></i><i class="s2" style="height:41.700%"></i><i class="s3" style="height:75%"></i></div>
                  <div class="grp"><i class="s1" style="height:50%"></i><i class="s2" style="height:25.200%"></i><i class="s3" style="height:91.700%"></i></div>
                </div>
                <div class="xlab"><span>Categary1</span><span>Categary2</span><span>Categary3</span></div>
              </div>
              <div class="legend"><span><i class="s1"></i>Series1</span><span><i class="s2"></i>Series2</span><span><i class="s3"></i>Series3</span></div>
            </div>
          </div>
          <div class="vscroll"><span><svg width="15" height="16"><path d="M3 10L7.500 6L12 10" stroke="#111" stroke-width="1.500" fill="none"/></svg></span></div>
        </div>
        <div class="hscroll"><span><svg width="15" height="24"><path d="M8 8L4 13L8 18" stroke="#111" stroke-width="1.500" fill="none"/></svg></span><div></div></div>
        <div class="status">
          <span class="tab"><svg width="12" height="12"><use href="#shlogo"/></svg>Sheet1</span>
          <svg width="26" height="16"><use href="#addlogo"/></svg><svg width="26" height="16"><use href="#addform"/></svg>
          <div class="zoom"><i class="pl2"></i><i class="pr2"></i><b></b><span><i></i></span></div>
        </div>
      </div>

      <nav class="strip">
        <svg><use href="#play"/></svg><svg><use href="#layout"/></svg><svg><use href="#ginfo"/></svg><svg><use href="#frame"/></svg><svg><use href="#drop"/></svg><svg><use href="#tree"/></svg><svg><use href="#clip"/></svg>
      </nav>

      <aside class="props">
        <h3>Cell Element<svg width="12" height="12"><path d="M11 1L3 9" stroke="#4499f7" stroke-width="1.500"/><path d="M0 12L2 5L7 10Z" fill="#4499f7"/></svg></h3>
        <div class="fields">
          <label class="a" for="p1">Cell</label><input id="p1" value="C4">
          <label class="b" for="p2">Insert Cell Element</label><div class="sel"><select id="p2"><option>SimSun</option></select><i></i></div>
        </div>
        <div class="switch"><button>Basic</button><button class="on">Advanced</button></div>
        <div class="fields adv">
          <label for="p3">Dataset</label><div class="sel db"><svg width="13" height="16"><use href="#db"/></svg><select id="p3"><option>ds1</option></select><i></i></div>
          <label for="p4">Dynamic Parameter</label><button id="p4">Injection</button>
          <label for="p5">Data<br>Column</label><div class="sel"><select id="p5"><option>sales_Volume</option></select><i></i></div>
          <label for="p6">Data<br>setting</label><div class="sel"><select id="p6"><option>summary</option></select><i></i></div>
          <div class="sel last"><select aria-label="Function"><option>Sum</option></select><i></i></div>
        </div>
      </aside>
    </div>
  </section>

  <section class="dash">
    <div class="card">
      <h2>General Manager Analysis</h2>
      <div class="two">
        <div class="cat">
          <h4>Product Category Analysis</h4>
          <div class="donut">
            <ul><li><i class="k1"></i>Target value</li><li><i class="k2"></i>Actual completion</li><li class="tall"><i class="k3"></i>Actual_Completion<br>_Rate</li></ul>
            <svg width="98" height="98" viewBox="-49 -49 98 98" fill="none">
              <g stroke-width="8">
                <path d="M0 -44A44 44 0 1 1 -8 43.300" stroke="#a9c6fb"/><path d="M0 -36A36 36 0 1 1 -6.500 35.400" stroke="#5b98f8"/><path d="M0 -28A28 28 0 1 1 -5 27.500" stroke="#1b6cf3"/>
                <path d="M-8 43.300A44 44 0 0 1 -31 31" stroke="#d3d8f1"/><path d="M-31 31A44 44 0 0 1 -18.500 -40" stroke="#cbe9da"/><path d="M-18.500 -40A44 44 0 0 1 0 -44" stroke="#dfebd5"/>
              </g>
              <g stroke-width="16"><path d="M-5.600 31.500A32 32 0 0 1 -22.600 22.600" stroke="#9a9fd6"/><path d="M-22.600 22.600A32 32 0 0 1 -13.500 -29" stroke="#80c79d"/><path d="M-13.500 -29A32 32 0 0 1 0 -32" stroke="#b9dc8f"/></g>
            </svg>
          </div>
        </div>
        <div class="trend">
          <h4>Sales target achievement trend chart</h4>
          <svg width="270" height="130" class="tc">
            <g fill="#5b98f8"><path d="M18 43H37V95H18ZM79 84H98V95H79ZM140 66H159V95H140ZM202 85H221V95H202Z"/></g>
            <g fill="#c3dcae"><circle cx="27.500" cy="94" r="5"/><circle cx="88.500" cy="94" r="5"/><circle cx="149.500" cy="94" r="5"/><circle cx="211.500" cy="94" r="5"/></g>
            <path d="M27 28L88 41L150 34L211 27" stroke="#7dc09a" stroke-width="1.200" fill="none"/>
            <g class="gv"><text x="27" y="23">67.61%</text><text x="89" y="32">64.67%</text><text x="150" y="25">68.36%</text><text x="211" y="22">67.60%</text></g>
            <g class="bl"><text x="26" y="129">New York Branch</text><text x="86" y="129">Chicago Branch</text><text x="149" y="129">Los Angeles Branch</text><text x="213" y="129">California Branch</text></g>
            <g class="pc"><text x="270" y="10">80.00%</text><text x="270" y="48">60.00%</text><text x="270" y="85">40.00%</text><text x="270" y="122">20.00%</text></g>
          </svg>
        </div>
      </div>
      <div class="yr"><h4>Product Category Analysis</h4><p><i class="k4"></i>This year<i class="k5"></i>Last year</p></div>
      <div class="mini">
        <div class="my"><span>12000</span><span>10000</span><span>8000</span><span>6000</span><span>4000</span><span>2000</span><span>0</span></div>
        <div class="mp">
          <div><i style="height:50%"></i><i style="height:56%"></i></div>
          <div><i style="height:44%"></i><i style="height:83%"></i></div>
          <div><i style="height:54%"></i><i style="height:69%"></i></div>
          <div><i style="height:50%"></i><i style="height:56%"></i></div>
          <div><i style="height:52%"></i><i style="height:69%"></i></div>
          <div><i style="height:48%"></i><i style="height:54%"></i></div>
          <div><i style="height:48%"></i><i style="height:52%"></i></div>
          <div><i style="height:50%"></i><i style="height:56%"></i></div>
          <div><i style="height:75%"></i><i style="height:75%"></i></div>
        </div>
      </div>
    </div>
  </section>
</main>
</body>
</html>
```

FILE: styles.css
```css
* { box-sizing: border-box; }
body { margin: 0; background: #fff; font-family: Inter, "Liberation Sans", sans-serif; font-size: 14px; color: #111; overflow-x: hidden; }
button, input, select { font: inherit; color: inherit; border: 0; background: none; padding: 0; margin: 0; border-radius: 0; }
select { appearance: none; outline: 0; }
ul, h2, h3, h4, p { margin: 0; padding: 0; list-style: none; font-weight: 400; }
a { color: inherit; text-decoration: none; }
svg { display: block; flex: none; }
.defs { position: absolute; width: 0; height: 0; }

/* Windows share one grid cell, are offset by their margins and stacked by z-index. */
.scene { display: grid; padding-bottom: 23px; }
.scene > * { grid-area: 1 / 1; align-self: start; z-index: 1; }
.scene > .glow { z-index: 0; }
.scene > .designer { z-index: 2; }
.scene > .dash { z-index: 3; }
.glow { margin: 48px 367px 0 450px; height: 530px; border-radius: 30px; filter: blur(19px); background: linear-gradient(to bottom, rgba(60,86,190,0) 50%, rgba(60,86,190,.8)), linear-gradient(to right, #263f96, #3a4aa2 30%, #5459af 50%, #605cb0 70%, #5f5cb2); }

.car { width: 0; height: 0; border: 4px solid transparent; border-top: 5px solid #333; border-bottom: 0; flex: none; }
.car.g { border-top-color: #8f9196; }
.car.k { border-width: 4px 3px 0; border-top-color: #111; }
.sep { width: 1px; height: 20px; background: #d9dadd; flex: none; }

/* Preview windows */
.viewer { position: relative; font-size: 12px; color: #333; }
.viewer::after { content: ""; position: absolute; inset: auto 0 0 0; height: 210px; pointer-events: none; background: linear-gradient(rgba(165,182,222,0), rgba(165,182,222,.25) 40%, rgba(150,170,215,.85)); }
.viewer-left { width: 400px; margin-top: 320px; justify-self: start; border-radius: 24px; overflow: hidden; background: #fff; }
.viewer-tools { height: 100px; padding: 30px 0 0 36px; }
.bar1, .bar2 { display: flex; height: 20px; align-items: center; }
.bar1 button { display: flex; align-items: center; gap: 7px; height: 13px; padding-left: 10px; border-left: 1px solid #aaa; white-space: nowrap; width: 108px; flex: none; }
.bar1 button:first-child { width: 110px; padding: 0; border: 0; }
.bar1 button:nth-child(2) { width: 96px; }
.bar1 button:nth-child(3) { padding-left: 8px; }
.bar1 button:nth-child(4) { padding-left: 8px; }
.viewer-left .bar1 button:nth-child(4) { width: 40px; }
.bar1 .car { margin-left: 7px; }
.bar1 .wide { margin-left: 3px; }
.i-blue { color: #5e9fe2; } .i-violet { color: #9c90da; }
.bar2 { margin-top: 12px; }
.bar2 > * { display: flex; align-items: center; gap: 11px; height: 13px; padding-left: 12px; border-left: 1px solid #999; width: 70px; flex: none; }
.bar2 .off { color: #999ba0; width: 74px; padding-left: 18px; }
.bar2 .off.prev { width: 95px; padding-left: 11px; }
.bar2 .pager { width: 93px; padding-left: 6px; gap: 12px; white-space: nowrap; }
.bar2 input { width: 55px; height: 20px; border: 1px solid #999; padding: 0 5px; flex: none; }
.bar2 .end { width: 1px; padding: 0; }
.viewer-left .bar2 { margin-left: 2px; }

.age-canvas { margin-left: 36px; height: 529px; background: #f6f8fb; padding: 43px 0 0 48px; overflow: hidden; border-radius: 6px 0 0; }
.age-paper { border: 1px solid #cfd9e6; background: #fff; height: 500px; padding: 39px 0 0 28px; display: flex; font-family: "Liberation Sans", Arial, sans-serif; font-size: 16px; color: #55565a; }
.age-edge { width: 6px; height: 405px; background: #eef1f8; margin-right: 2px; flex: none; }
.age-report { width: 260px; flex: none; }
.age-report h2 { background: #8683ac; color: #fff; height: 62px; line-height: 62px; font-size: 27px; padding-left: 16px; }
.age-diag { height: 69px; position: relative; font-size: 13px; color: #444; }
.age-diag span { position: absolute; line-height: 14px; }
.ag { left: 96px; top: 7px; } .ct { left: 85px; top: 26px; transform: rotate(12deg); } .dp { left: 12px; top: 38px; }
.age-table { width: 100%; border-collapse: collapse; border-bottom: 2px solid #bbb; }
.age-table td { height: 36px; padding: 0 4px 0 0; text-align: center; }
.age-table tr:nth-child(odd) { background: #f4f4f5; }
.age-note { margin: 23px 0 0; border: 1px dashed #ccd0d8; line-height: 26px; padding-left: 2px; white-space: nowrap; }
.grip { margin: 23px 0 0 -8px; }
.age-scroll { display: flex; height: 22px; align-items: center; padding-left: 36px; }
.age-scroll div { flex: 1; height: 22px; background: #dddfe6; }
.age-sheets { display: flex; height: 53px; padding: 0 0 0 38px; align-items: start; gap: 8px; }
.age-sheets svg { margin-top: 4px; opacity: .7; }
.age-sheets .tab { display: flex; gap: 4px; width: 74px; height: 20px; padding-left: 3px; color: #777b88; line-height: 20px; background: rgba(255,255,255,.4); }

.viewer-right { width: 502px; justify-self: end; margin-top: 232px; height: 631px; display: flex; border-radius: 24px; overflow: hidden; }
.viewer-right .viewer-tools { height: 104px; background: rgba(255,255,255,.83); }
.viewer-right .bar2 { margin: 16px 0 0 -24px; }
.inv-main { width: 463px; display: flex; flex-direction: column; }
.inv-body { flex: 1; display: flex; background: rgba(244,247,251,.78); }
.inv-col { width: 450px; display: flex; flex-direction: column; padding-top: 41px; }
.inv-paper { width: 414px; height: 418px; background: rgba(255,255,255,.4); border: solid #d5d9e6; border-width: 1px 2px 0 0; font-size: 9px; color: #7b7f92; }
.inv-head { display: flex; height: 121px; }
.inv-from { width: 249px; padding: 37px 0 0 104px; display: grid; grid-template-columns: 31px 1fr; align-content: start; color: #5a5c70; font-size: 7px; line-height: 10px; }
.inv-from b { font-weight: 500; }
.inv-from p { padding-top: 4px; }
.inv-from p:first-of-type { height: 48px; }
.inv-from i { display: block; height: 3px; margin-bottom: 7px; background: #d8d9e0; border-radius: 2px; }
.inv-from p:not(:first-of-type) { height: 10px; }
.l62 { width: 62px; } .l38 { width: 38px; } .l46 { width: 46px; } .l60 { width: 60px; }
.inv-title { padding-top: 31px; }
.inv-title h2 { font-size: 32px; line-height: 40px; font-weight: 500; color: #5a70ae; }
.inv-title i { display: block; height: 6px; border-radius: 3px; background: #d8dae1; margin-top: 6px; }
.inv-title .t2 { margin-top: 9px; }
.t1 { width: 42px; } .t2 { width: 66px; }
.inv-table { width: 374px; table-layout: fixed; border-collapse: collapse; font-size: 8px; }
.c80 { width: 80px; } .c42 { width: 42px; } .c91 { width: 91px; } .c53 { width: 53px; } .c43 { width: 43px; } .c65 { width: 65px; }
.inv-table th { height: 22px; padding: 0; font-weight: 400; border: 1px solid #9298ac; white-space: nowrap; }
.inv-table tbody td { height: 169px; padding: 6px 0 0; border: 1px solid #9298ac; vertical-align: top; }
.inv-table .amt, .inv-table tfoot td:last-child { line-height: 19px; padding-left: 9px; font-size: 9px; text-align: left; }
.inv-table tfoot td { height: 18px; padding: 0 7px 0 0; text-align: right; font-size: 9px; line-height: 14px; }
.inv-table tfoot td:last-child { border: 1px solid #9298ac; line-height: 14px; }
.barcode { margin: 11px 0 0 287px; }
.inv-scroll { height: 20px; display: flex; align-items: center; }
.inv-scroll div { width: 418px; height: 20px; background: #dcdfe8; }
.inv-zoom { display: flex; align-items: center; height: 18px; padding: 0 6px 0 172px; color: #444; }
.inv-zoom .mn { width: 11px; height: 1px; background: #444; }
.inv-zoom .trk { flex: 1; height: 10px; display: flex; justify-content: center; }
.inv-zoom .trk i { width: 4px; height: 10px; background: #8a90a4; border-radius: 1px; }
.inv-zoom svg { margin-right: 10px; }
.inv-vs { width: 13px; margin: 86px 0 28px; background: #e4e4e6; }

/* Icon strip */
.strip { width: 49px; background: #eff0f2; display: flex; flex-direction: column; align-items: center; gap: 16px; padding: 11px 0 0 4px; flex: none; margin-top: 2px; }
.strip svg { width: 20px; height: 20px; }
.strip.small { width: 39px; margin: 0; gap: 15px; padding-top: 16px; background: linear-gradient(#f1f3f6 104px, #f5f7fb 104px); }
.strip.small svg { width: 14px; height: 14px; opacity: .8; }

/* Designer */
.designer { margin: 126px 449px 0 362px; border-radius: 26px; overflow: hidden; background: #fff; box-shadow: 0 1px 1px rgba(120,130,160,.3); }
.title { height: 55px; background: #f5f6f8; display: flex; align-items: center; padding: 3px 26px 0 39px; }
.title > span { margin-left: 7px; font-family: Roboto, sans-serif; font-size: 19px; color: #474b52; }
.ctl { margin-left: auto; display: flex; gap: 45px; }
.body { display: flex; }
.side { width: 224px; flex: none; }
.side-tools { height: 55px; display: flex; align-items: center; gap: 11px; padding: 2px 0 0 38px; border-bottom: 1px solid #d0d1d3; }
.files { padding: 8px 0 0 21px; }
.files li { display: flex; align-items: center; height: 37px; padding-left: 18px; position: relative; }
.files li::before { content: ""; position: absolute; left: 0; top: 0; bottom: 0; border-left: 2px solid #b4b5b8; }
.files li:first-child::before { top: 14px; }
.files li:last-child::before { bottom: 17px; }
.files li::after { content: ""; position: absolute; left: 2px; top: 20px; width: 10px; height: 1px; background: #b4b5b8; }
.files li:not(.on) { background: conic-gradient(from 225deg at 6px 50%, #a3a5a8 90deg, transparent 0) 1px 14px / 6px 12px no-repeat; }
.files li svg { margin-right: 2px; margin-top: 4px; }
.files a { padding: 0 8px 0 4px; line-height: 24px; }
.files .on a { background: #4499f7; color: #fff; }
.files .on { margin-top: 1px; }
.hbar { width: 193px; height: 8px; border-radius: 4px; background: #efeff0; margin: 48px 0 3px; }
.split { height: 17px; background: #d6d8dc; display: flex; align-items: center; justify-content: space-between; padding: 0 39px 0 20px; }
.split i { border: 5px solid transparent; border-width: 0 5px 5px; border-bottom-color: #96989c; }
.split .dn { border-width: 5px 5px 0; border-top-color: #96989c; }
.split b { width: 7px; height: 4px; border: solid #85878b; border-width: 1px 0; }
.ds-tools { height: 37px; display: flex; align-items: center; padding: 0 0 4px 19px; border-bottom: 1px solid #999; }
.ds-tools .car { margin: 0 9px 0 4px; }
.ds-tools .sep { margin-right: 14px; }
.ds-tools .tr { color: #888; margin: 0 9px 0 12px; }
.ds-tools .sep ~ .sep { margin-right: 8px; }
.ds-tools .tf { margin-left: 22px; }
.ds-tabs { background: #eff0f2; height: 74px; padding: 5px 20px; font-size: 13px; line-height: 29px; display: flex; flex-direction: column; color: #000; }
.ds { font-size: 19px; color: #333; padding: 17px 20px; }
.ds li { display: flex; align-items: center; gap: 11px; height: 50px; }
.ds li:nth-child(2) { margin-top: 16px; }
.ds .sub { padding-left: 16px; }

.center { flex: 1; min-width: 0; }
.top { display: grid; grid-template-columns: 68px 1fr; grid-template-rows: 50px 31px; }
.pv { grid-row: 1 / 3; padding: 15px 0 0 18px; position: relative; }
.pv .car { display: block; margin: 9px 0 0 8px; }
.pv::after { content: ""; position: absolute; right: 9px; top: 17px; height: 48px; border-left: 1px solid #dddee0; }
.toolbar { display: flex; align-items: center; gap: 30px; padding-top: 3px; }
.toolbar svg { width: 24px; height: 24px; }
.toolbar .sep { margin: 0 2px 0 3px; }
.charts { display: flex; gap: 37px; }
.tabs { background: #e7e7e7; display: flex; border-top: 1px solid #ddd; }
.tabs .add { width: 36px; padding-left: 10px; }
.cur { width: 266px; background: #fff; border-right: 1px solid #999; display: flex; align-items: center; justify-content: space-between; padding: 0 8px 0 15px; }
.wd { margin: 9px 10px 0 auto; }
.format { height: 31px; display: flex; align-items: center; padding: 0 17px 1px 17px; white-space: nowrap; }
.sel { display: flex; height: 24px; border: 1px solid #d7d8dc; background: #fff; flex: none; }
.sel select { flex: 1; min-width: 0; padding-left: 8px; }
.sel i { width: 23px; background: #d7d8dc; display: flex; align-items: center; justify-content: center; flex: none; }
.sel i::after { content: ""; width: 6px; height: 6px; border: solid #444; border-width: 0 1px 1px 0; rotate: 45deg; margin-bottom: 3px; }
.f1 { width: 170px; margin-right: 2px; } .f2 { width: 63px; }
.f2 select { padding-left: 6px; }
.biu { display: flex; width: 130px; padding-left: 32px; gap: 29px; font-size: 14px; }
.biu em { font-family: "Liberation Serif", serif; }
.aligns { display: flex; gap: 23px; width: 152px; padding-left: 17px; flex: none; }
.aligns span { width: 25px; height: 22px; display: grid; place-items: center; }
.aligns .on { background: #4499f7; color: #fff; }
.fills { display: flex; align-items: center; width: 155px; padding-left: 16px; gap: 7px; flex: none; }
.fills .k { margin-right: 9px; }
.fc { width: 18px; border-bottom: 4px solid #000; line-height: 17px; text-align: center; font-size: 14px; }
.cells { display: flex; align-items: center; flex: 1; padding-left: 8px; justify-content: space-between; font-size: 13px; }
.cells svg { width: 18px; height: 17px; }
.cells small { font-size: 9px; }

.params { display: grid; grid-template-columns: 34px 1fr; grid-template-rows: 21px 85px; background: #f5f6f8; }
.corner { border: solid #8f9196; border-width: 0 1px 1px 0; margin-left: 17px; }
.hruler { border-bottom: 1px solid #8f9196; position: relative; overflow: hidden; }
.nums { position: absolute; inset: 0; display: flex; font-size: 10px; line-height: 16px; color: #333; }
.nums span { width: 113px; padding-left: 3px; flex: none; }
.vruler { border-right: 1px solid #8f9196; padding-left: 17px; position: relative; }
.vruler span { position: absolute; left: 18px; top: 2px; font-size: 10px; rotate: -90deg; }
.pform { display: flex; padding: 13px 0 0 12px; }
.region { display: flex; width: 250px; height: 24px; border: 1px solid #85878c; }
.region label { width: 91px; text-align: right; padding-right: 6px; line-height: 22px; }
.region input { width: 133px; border: solid #85878c; border-width: 0 1px; background: linear-gradient(#4b5878, #4b5878) 6px 5px / 3px 12px no-repeat; }
.region span { display: grid; place-items: center; flex: 1; }
.query { width: 156px; height: 24px; background: #dedfe2; margin: 14px 0 0 91px; display: block; }
.pe { display: flex; gap: 40px; margin-left: 336px; padding-top: 10px; }
.divide { height: 13px; background: #d6d8dc; }
.grid-wrap { display: flex; }
.sheet-box { flex: 1; position: relative; min-width: 0; }
.sheet { width: 100%; table-layout: fixed; border-spacing: 0; background: #f5f6f8; font-size: 13px; color: #85878c; line-height: 14px; }
.w42 { width: 42px; } .w84 { width: 84px; } .w88 { width: 88px; } .w81 { width: 81px; } .w143 { width: 143px; } .w82 { width: 82px; } .w80 { width: 80px; } .w83 { width: 83px; } .w172 { width: 172px; }
.sheet th, .sheet td { padding: 0; border: solid #d5d7da; border-width: 0 1px 1px 0; font-weight: 400; }
.sheet th { background: #e8e8e8; }
.sheet thead th { height: 24px; }
.sheet thead th:first-child { background: #f5f6f8; }
.sheet thead svg { margin: 0 auto; }
.sheet .hl, .sheet thead .hl { background: #dbe7fc; }
.sheet tbody tr { height: 20px; }
.sheet .h18 { height: 18px; } .sheet .h21 { height: 21px; } .sheet .h22 { height: 22px; } .sheet .h24 { height: 24px; } .sheet .h44 { height: 44px; }
.sheet .last th { background: #fff; }
.sheet .last > * { border-bottom: 0; }
.report { position: absolute; left: 42px; top: 45px; width: 397px; table-layout: fixed; border-collapse: collapse; background: #fff; font-size: 10px; line-height: 12px; color: #222; text-align: center; }
.report td { border: 1px solid #000; padding: 0; }
.ra { height: 42px; } .rb { height: 22px; }
.report .ots { padding-right: 24px; }
.report .sum { padding-right: 20px; }
.diag { position: relative; }
.diag svg { position: absolute; left: 0; top: 0; }
.diag span { position: absolute; }
.diag .p { right: 12px; top: 4px; } .diag .r { left: 15px; top: 22px; } .diag .s { left: 80px; top: 20px; rotate: 13deg; }
.chart { position: absolute; left: 42px; top: 131px; width: 720px; height: 369px; border: 1px solid #222; background: #fff; display: flex; padding: 16px 0 0; }
.ylab { width: 33px; margin-right: 13px; text-align: right; height: 333px; margin-top: -14px; display: flex; flex-direction: column; justify-content: space-between; font-size: 15px; line-height: 24px; color: #000; }
.plotcol { width: 577px; }
.plot { height: 310px; display: flex; align-items: flex-end; gap: 46px; padding-left: 12px; background: linear-gradient(#d8dade 1px, transparent 1px) 0 0 / 100% 51.500px; }
.grp { height: 100%; width: 147px; display: flex; gap: 9px; align-items: flex-end; }
.grp i { width: 43px; }
.s1 { background: #3f9aee; } .s2 { background: #b0cafd; } .s3 { background: #e1eafd; }
.xlab { display: flex; gap: 46px; padding-left: 12px; line-height: 36px; color: #85878c; }
.xlab span { width: 147px; text-align: center; }
.legend { font-size: 15px; color: #000; padding: 131px 0 0 1px; }
.legend span { display: flex; align-items: center; gap: 5px; height: 27px; }
.legend i { width: 16px; height: 16px; }
.vscroll { width: 15px; background: #e1e2e4; }
.vscroll span, .hscroll span { display: block; background: #fff; }
.hscroll { display: flex; height: 24px; background: #f5f6f8; padding-left: 14px; }
.hscroll div { flex: 1; background: #e7e7e7; }
.status { display: flex; height: 27px; background: #f5f6f8; padding-left: 14px; gap: 9px; border-bottom: 2px solid #fff; }
.status > svg { margin-top: 5px; }
.status .tab { background: #fff; width: 81px; height: 24px; display: flex; gap: 4px; padding-left: 7px; line-height: 22px; color: #85878c; margin-right: 4px; font-size: 13px; }
.status .tab svg { margin-top: 7px; }
.zoom { display: flex; align-items: center; margin-left: 374px; flex: 1; }
.pl2, .pr2 { border: 5px solid transparent; border-left: 0; border-right: 6px solid #9c9ea2; margin-right: 23px; }
.pr2 { border-right: 0; border-left: 6px solid #9c9ea2; margin-right: 18px; }
.zoom b { width: 13px; height: 2px; background: #444; margin-right: 6px; }
.zoom span { flex: 1; height: 1px; background: #d5d7da; padding-left: 117px; }
.zoom span i { display: block; width: 6px; height: 14px; margin-top: -6px; border-radius: 3px; background: #8a8c90; }

.props { width: 310px; flex: none; padding: 0 24px 0 18px; }
.props h3 { height: 47px; font-size: 14px; line-height: 53px; border-bottom: 1px solid #c9cbd0; font-weight: 500; display: flex; justify-content: space-between; }
.props h3 svg { margin-top: 20px; }
.fields { display: grid; grid-template-columns: 83px 1fr; line-height: 20px; padding-top: 21px; align-items: start; }
.fields label { padding-right: 6px; }
.fields .a { padding-top: 2px; }
.fields input, .fields > button { height: 24px; border: 1px solid #d7d8dc; padding-left: 5px; color: #85878c; width: 100%; font-size: 13px; }
.fields .b { height: 65px; margin-top: 14px; }
.fields .b + .sel { margin-top: 22px; }
.fields .sel { color: #85878c; font-size: 13px; }
.fields .sel select { padding-left: 5px; }
.fields .sel.db { align-items: stretch; }
.db svg { margin: 3px 0 0 4px; }
.switch { display: flex; height: 33px; background: #eff0f2; }
.switch button { flex: 1; padding-right: 12px; }
.switch button:first-child { flex: 0 0 136px; }
.switch .on { background: #d7d8dc; padding: 0 0 0 20px; }
.adv { grid-template-rows: 39px 55px 55px 48px 24px; padding-top: 23px; }
.adv label { margin-top: 2px; }
.adv label[for="p3"] { margin-top: 4px; }
.adv label[for="p4"] { margin-top: 0; }
.adv > button { height: 22px; }
.adv .sel:nth-of-type(n+2):not(.last) { margin-top: 6px; }
.adv .last { grid-column: 2; margin-top: 6px; }

/* Dashboard card */
.dash { width: 560px; justify-self: end; margin: 640px 328px 0 0; height: 383px; border-radius: 14px; background: #fff; padding: 14px 15px 0 14px; box-shadow: 0 0 34px rgba(90,100,150,.22); clip-path: inset(-60px -60px 0 -60px); }
.card { height: 369px; border: 2px solid #e2e2ea; border-bottom: 0; border-radius: 7px 7px 0 0; padding: 18px 22px 0 20px; color: #6d6f78; }
.card h2 { font-size: 18px; line-height: 24px; font-weight: 600; color: #2b3d91; }
.card h4 { font-size: 9px; line-height: 14px; }
.two { display: grid; grid-template-columns: 206px 1fr; margin-top: 6px; }
.two .trend { padding-left: 17px; }
.donut { display: flex; gap: 8px; padding-top: 16px; }
.donut ul { font-size: 7px; line-height: 8px; width: 69px; padding: 21px 0 0 2px; white-space: nowrap; }
.donut li { display: flex; gap: 3px; height: 16px; align-items: start; }
.donut li.tall { padding-top: 2px; }
.donut i { width: 7px; height: 7px; flex: none; }
.k1 { background: #1b6cf3; } .k2 { background: #a9c6fb; } .k3 { background: #80c79d; }
.tc { width: 270px; font-size: 7px; overflow: visible; margin-left: -7px; }
.gv text, .bl text { text-anchor: middle; } .gv { fill: #96cfad; } .bl { fill: #555; } .pc { fill: #555; }
.pc text { text-anchor: end; }
.yr { display: flex; justify-content: space-between; margin-top: 10px; }
.yr p { display: flex; align-items: center; gap: 2px; font-size: 5px; padding-top: 8px; height: 22px; }
.yr p i { width: 7px; height: 7px; margin-left: 2px; }
.k4 { background: #8db8fb; } .k5 { background: #d5e3fb; }
.my { width: 20px; margin-right: 7px; text-align: right; font-size: 7px; line-height: 8px; height: 118px; display: flex; flex-direction: column; justify-content: space-between; color: #a0a2a8; }
.mini { display: flex; }
.mp { flex: 1; margin-top: 5px; height: 110px; display: flex; justify-content: space-between; padding: 0 16px 0 26px; background: linear-gradient(#e0e1e4 1px, transparent 1px) 0 0 / 100% 18px; }
.mp div { display: flex; align-items: flex-end; height: 100%; }
.mp i { width: 12px; background: #8db8fb; }
.mp i + i { width: 13px; background: rgba(200,220,251,.75); }
```
